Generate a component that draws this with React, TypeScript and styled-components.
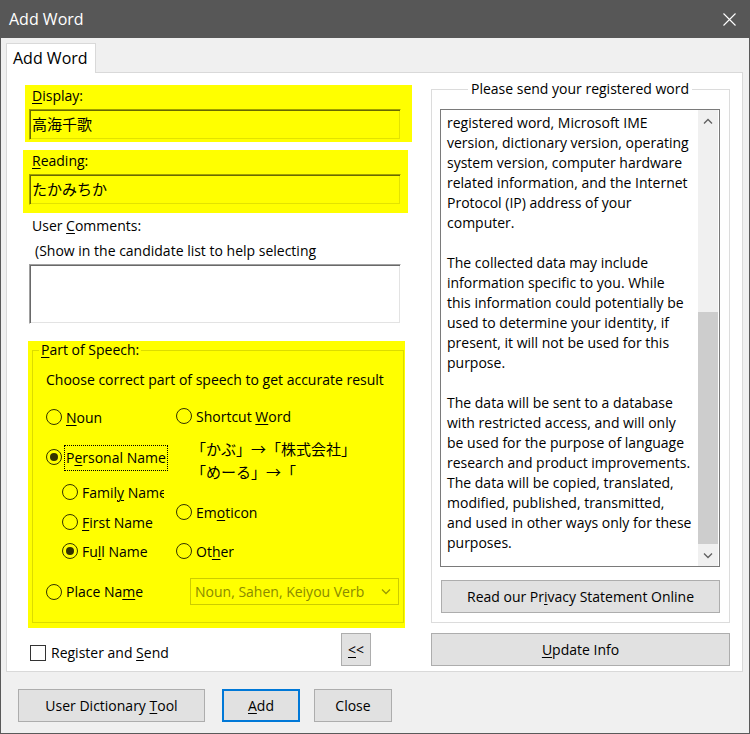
import React from 'react';
import styled, { createGlobalStyle } from 'styled-components';

const UI = `"Open Sans", "Noto Sans", "Noto Sans CJK JP", sans-serif`;
const CJK = `"Noto Sans CJK JP", "Noto Sans CJK SC", sans-serif`;

const GlobalStyle = createGlobalStyle`
  html, body { margin: 0; padding: 0; background: #f0f0f0; }
  body { font-family: ${UI}; font-size: 14px; color: #000; }
  * { box-sizing: border-box; }
  u { text-decoration-thickness: 1px; text-underline-offset: 2px; }
`;

const Window = styled.div`
  width: 750px;
  height: 734px;
  border: 1px solid #5a5a5a;
  border-top: none;
  background: #f0f0f0;
  display: flex;
  flex-direction: column;
`;

const TitleBar = styled.div`
  height: 38px;
  flex: none;
  background: #575757;
  color: #fff;
  display: flex;
  align-items: center;
  justify-content: space-between;
  padding: 0 14px 0 9px;
  font-size: 16px;
  margin: 0 -1px;
`;

const Body = styled.div`
  padding: 5px 0 0 5px;
  display: flex;
  flex-direction: column;
`;

const TabStrip = styled.div`
  display: flex;
  height: 29px;
`;

const Tab = styled.div`
  width: 90px;
  height: 30px;
  background: #fff;
  border: 1px solid #d9d9d9;
  border-bottom: none;
  padding-left: 6px;
  line-height: 28px;
  font-size: 16px;
  position: relative;
  z-index: 1;
`;

const Panel = styled.div`
  width: 737px;
  height: 600px;
  background: #fff;
  border: 1px solid #d9d9d9;
  display: flex;
  padding: 0 12px 0 16px;
  gap: 19px;
`;

const LeftCol = styled.div`
  width: 389px;
  display: flex;
  flex-direction: column;
  padding-top: 12px;
`;

const Highlight = styled.div<{ $ml: number; $w: number; $mt?: number; $pl?: number; $pt?: number; $pb?: number }>`
  background: #ffff00;
  margin-left: ${p => p.$ml}px;
  width: ${p => p.$w}px;
  margin-top: ${p => p.$mt ?? 0}px;
  padding: ${p => p.$pt ?? 0}px 0 ${p => p.$pb ?? 0}px ${p => p.$pl ?? 0}px;
  display: flex;
  flex-direction: column;
`;

const FieldLabel = styled.div<{ $gap?: number }>`
  line-height: 20px;
  padding-left: 3px;
  margin-bottom: ${p => p.$gap ?? 0}px;
`;

const SunkenInput = styled.div<{ $onYellow?: boolean; $h: number }>`
  width: 372px;
  height: ${p => p.$h}px;
  border-top: 1px solid ${p => (p.$onYellow ? '#a0a000' : '#a0a0a0')};
  border-left: 1px solid ${p => (p.$onYellow ? '#a0a000' : '#a0a0a0')};
  border-right: 1px solid ${p => (p.$onYellow ? '#ffff00' : '#ffffff')};
  border-bottom: 1px solid ${p => (p.$onYellow ? '#ffff00' : '#ffffff')};
  box-shadow: inset 1px 1px 0 ${p => (p.$onYellow ? '#696900' : '#696969')},
    inset -1px -1px 0 ${p => (p.$onYellow ? '#e3e300' : '#e3e3e3')};
  font-family: ${CJK};
  font-size: 15px;
  line-height: 27px;
  padding-left: 2px;
`;

const PlainLine = styled.div<{ $pl: number }>`
  line-height: 25px;
  padding-left: ${p => p.$pl}px;
  white-space: nowrap;
`;

const CommentBox = styled(SunkenInput)`
  margin-left: 6px;
  margin-top: 1px;
`;

const GroupBox = styled.fieldset<{ $onYellow?: boolean }>`
  margin: 0;
  padding: 0;
  border: 1px solid ${p => (p.$onYellow ? '#dcdc00' : '#dcdcdc')};
  min-width: 0;
`;

const PartGroup = styled(GroupBox)`
  width: 372px;
  height: 282px;
  padding: 0 0 16px 13px;
`;

const PartLegend = styled.legend`
  padding: 0 2px;
  margin-left: -7px;
  line-height: 18px;
`;

const Hint = styled.div`
  line-height: 20px;
  margin-top: 11px;
  white-space: nowrap;
`;

const Options = styled.div`
  display: flex;
`;

const OptCol = styled.div<{ $w?: number }>`
  display: flex;
  flex-direction: column;
  width: ${p => (p.$w ? `${p.$w}px` : 'auto')};
`;

const RadioRow = styled.div<{ $indent?: number; $mt?: number }>`
  display: flex;
  align-items: center;
  height: 20px;
  gap: 4px;
  margin-left: ${p => p.$indent ?? 0}px;
  margin-top: ${p => p.$mt ?? 0}px;
  white-space: nowrap;
`;

const RadioCircle = styled.span<{ $checked?: boolean }>`
  width: 16px;
  height: 16px;
  flex: none;
  border-radius: 50%;
  border: 1px solid #333300;
  display: flex;
  align-items: center;
  justify-content: center;
  &::after {
    content: '';
    width: 8px;
    height: 8px;
    border-radius: 50%;
    background: ${p => (p.$checked ? '#333300' : 'transparent')};
  }
`;

const RadioText = styled.span<{ $clip?: number; $focus?: boolean }>`
  display: inline-block;
  overflow: hidden;
  max-width: ${p => (p.$clip ? `${p.$clip}px` : 'none')};
  ${p =>
    p.$focus
      ? `outline: 1px dotted #000; outline-offset: 0; padding: 2px 1px 3px; margin: -2px 0 -3px -1px;`
      : ''}
`;

const Example = styled.div`
  font-family: ${CJK};
  font-size: 15px;
  line-height: 23px;
  margin: 11px 0 2px 15px;
  white-space: nowrap;
`;

const PlaceRow = styled.div`
  display: grid;
  grid-template-columns: 144px 209px;
  align-items: center;
  margin-top: 17px;
`;

const Dropdown = styled.div`
  height: 27px;
  border: 1px solid #cccc00;
  color: #8a8a00;
  display: flex;
  align-items: center;
  justify-content: space-between;
  padding: 0 7px 0 4px;
  white-space: nowrap;
`;

const BottomRow = styled.div`
  display: flex;
  align-items: center;
  margin-top: 5px;
  padding: 0 41px 0 7px;
`;

const CheckLabel = styled.div`
  display: flex;
  align-items: center;
  gap: 5px;
  margin-top: 6px;
`;

const CheckBox = styled.span`
  width: 16px;
  height: 16px;
  border: 1px solid #333;
  background: #fff;
  flex: none;
`;

const Button = styled.div<{ $w: number; $h?: number; $primary?: boolean; $ml?: number; $mt?: number }>`
  width: ${p => p.$w}px;
  height: ${p => p.$h ?? 33}px;
  flex: none;
  background: #e1e1e1;
  border: ${p => (p.$primary ? '2px solid #0078d7' : '1px solid #adadad')};
  display: flex;
  align-items: center;
  justify-content: center;
  margin-left: ${p => p.$ml ?? 0}px;
  margin-top: ${p => p.$mt ?? 0}px;
  white-space: nowrap;
`;

const SmallButton = styled(Button)`
  margin-left: auto;
`;

const RightCol = styled.div`
  width: 299px;
  display: flex;
  flex-direction: column;
  padding-top: 6px;
`;

const SendGroup = styled(GroupBox)`
  width: 299px;
  height: 544px;
  padding: 0 9px 9px 8px;
  display: flex;
  flex-direction: column;
`;

const CenterLegend = styled.legend`
  margin: 0 auto;
  padding: 0 3px;
  line-height: 20px;
`;

const TextBox = styled.div`
  margin-top: 10px;
  width: 280px;
  height: 458px;
  border: 1px solid #7a7a7a;
  display: flex;
  background: #fff;
`;

const TextContent = styled.div`
  flex: 1;
  overflow: hidden;
  padding: 3px 0 0 6px;
  line-height: 20px;
  white-space: nowrap;
`;

const TextLine = styled.div`
  height: 20px;
`;

const ScrollBar = styled.div`
  width: 20px;
  margin-right: 1px;
  background: #f0f0f0;
  display: flex;
  flex-direction: column;
`;

const ScrollArrow = styled.div`
  height: 21px;
  display: flex;
  align-items: center;
  justify-content: center;
  flex: none;
`;

const ScrollTrack = styled.div`
  flex: 1;
  display: flex;
  flex-direction: column;
  justify-content: flex-end;
  padding-bottom: 1px;
`;

const ScrollThumb = styled.div`
  height: 232px;
  background: #cdcdcd;
`;

const Footer = styled.div`
  display: flex;
  padding: 17px 0 0 12px;
`;

const Chevron = ({ up, color = '#606060' }: { up?: boolean; color?: string }) => (
  <svg width="10" height="6" viewBox="0 0 10 6">
    <path
      d={up ? 'M1 5.5 L5 1.5 L9 5.5' : 'M1 0.5 L5 4.5 L9 0.5'}
      fill="none"
      stroke={color}
      strokeWidth="1.3"
    />
  </svg>
);

const CloseIcon = () => (
  <svg width="13" height="13" viewBox="0 0 13 13">
    <path d="M0.5 0.5 L12.5 12.5 M12.5 0.5 L0.5 12.5" stroke="#fff" strokeWidth="1.1" fill="none" />
  </svg>
);

const Radio = ({
  label,
  checked,
  indent,
  mt,
  clip,
  focus,
}: {
  label: React.ReactNode;
  checked?: boolean;
  indent?: number;
  mt?: number;
  clip?: number;
  focus?: boolean;
}) => (
  <RadioRow $indent={indent} $mt={mt}>
    <RadioCircle $checked={checked} />
    <RadioText $clip={clip} $focus={focus}>
      {label}
    </RadioText>
  </RadioRow>
);

const privacyLines = [
  'registered word, Microsoft IME',
  'version, dictionary version, operating',
  'system version, computer hardware',
  'related information, and the Internet',
  'Protocol (IP) address of your',
  'computer.',
  '',
  'The collected data may include',
  'information specific to you. While',
  'this information could potentially be',
  'used to determine your identity, if',
  'present, it will not be used for this',
  'purpose.',
  '',
  'The data will be sent to a database',
  'with restricted access, and will only',
  'be used for the purpose of language',
  'research and product improvements.',
  'The data will be copied, translated,',
  'modified, published, transmitted,',
  'and used in other ways only for these',
  'purposes.',
];

export default function App() {
  return (
    <>
      <GlobalStyle />
      <Window>
        <TitleBar>
          <span>Add Word</span>
          <CloseIcon />
        </TitleBar>
        <Body>
          <TabStrip>
            <Tab>Add Word</Tab>
          </TabStrip>
          <Panel>
            <LeftCol>
              <Highlight $ml={2} $w={387} $pl={4} $pt={1} $pb={2}>
                <FieldLabel $gap={3}>
                  <u>D</u>isplay:
                </FieldLabel>
                <SunkenInput $onYellow $h={31}>高海千歌</SunkenInput>
              </Highlight>
              <Highlight $ml={0} $w={385} $mt={8} $pl={6} $pt={1} $pb={8}>
                <FieldLabel $gap={3}>
                  <u>R</u>eading:
                </FieldLabel>
                <SunkenInput $onYellow $h={31}>たかみちか</SunkenInput>
              </Highlight>
              <PlainLine $pl={9}>
                User <u>C</u>omments:
              </PlainLine>
              <PlainLine $pl={12}>(Show in the candidate list to help selecting</PlainLine>
              <CommentBox $h={60} />
              <Highlight $ml={5} $w={377} $mt={17} $pl={4} $pb={5}>
                <PartGroup $onYellow>
                  <PartLegend>
                    <u>P</u>art of Speech:
                  </PartLegend>
                  <Hint>Choose correct part of speech to get accurate result</Hint>
                  <Options>
                    <OptCol $w={130}>
                      <Radio mt={17} label={<><u>N</u>oun</>} />
                      <Radio mt={20} checked focus label={<>P<u>e</u>rsonal Name</>} />
                      <Radio mt={15} indent={16} clip={82} label={<>Famil<u>y</u> Name</>} />
                      <Radio mt={10} indent={16} label={<><u>F</u>irst Name</>} />
                      <Radio mt={9} indent={16} checked label={<>Fu<u>l</u>l Name</>} />
                    </OptCol>
                    <OptCol>
                      <Radio mt={16} label={<>Shortcut <u>W</u>ord</>} />
                      <Example>
                        <div>「かぶ」→「株式会社」</div>
                        <div>「めーる」→「</div>
                      </Example>
                      <Radio mt={17} label={<>Em<u>o</u>ticon</>} />
                      <Radio mt={19} label={<>Ot<u>h</u>er</>} />
                    </OptCol>
                  </Options>
                  <PlaceRow>
                    <Radio label={<>Place Na<u>m</u>e</>} />
                    <Dropdown>
                      <span>Noun, Sahen, Keiyou Verb</span>
                      <Chevron color="#9a9a00" />
                    </Dropdown>
                  </PlaceRow>
                </PartGroup>
              </Highlight>
              <BottomRow>
                <CheckLabel>
                  <CheckBox />
                  <span>
                    Register and <u>S</u>end
                  </span>
                </CheckLabel>
                <SmallButton $w={30}>
                  <span>
                    <u>&lt;</u>&lt;
                  </span>
                </SmallButton>
              </BottomRow>
            </LeftCol>
            <RightCol>
              <SendGroup>
                <CenterLegend>Please send your registered word</CenterLegend>
                <TextBox>
                  <TextContent>
                    {privacyLines.map((l, i) => (
                      <TextLine key={i}>{l}</TextLine>
                    ))}
                  </TextContent>
                  <ScrollBar>
                    <ScrollArrow>
                      <Chevron up />
                    </ScrollArrow>
                    <ScrollTrack>
                      <ScrollThumb />
                    </ScrollTrack>
                    <ScrollArrow>
                      <Chevron />
                    </ScrollArrow>
                  </ScrollBar>
                </TextBox>
                <Button $w={279} $ml={1} $mt={13}>
                  <span>
                    Read our Pr<u>i</u>vacy Statement Online
                  </span>
                </Button>
              </SendGroup>
              <Button $w={299} $mt={10}>
                <span>
                  <u>U</u>pdate Info
                </span>
              </Button>
            </RightCol>
          </Panel>
          <Footer>
            <Button $w={187}>
              <span>
                User Dictionary <u>T</u>ool
              </span>
            </Button>
            <Button $w={78} $ml={17} $primary>
              <span>
                <u>A</u>dd
              </span>
            </Button>
            <Button $w={78} $ml={14}>
              <span>Close</span>
            </Button>
          </Footer>
        </Body>
      </Window>
    </>
  );
}
